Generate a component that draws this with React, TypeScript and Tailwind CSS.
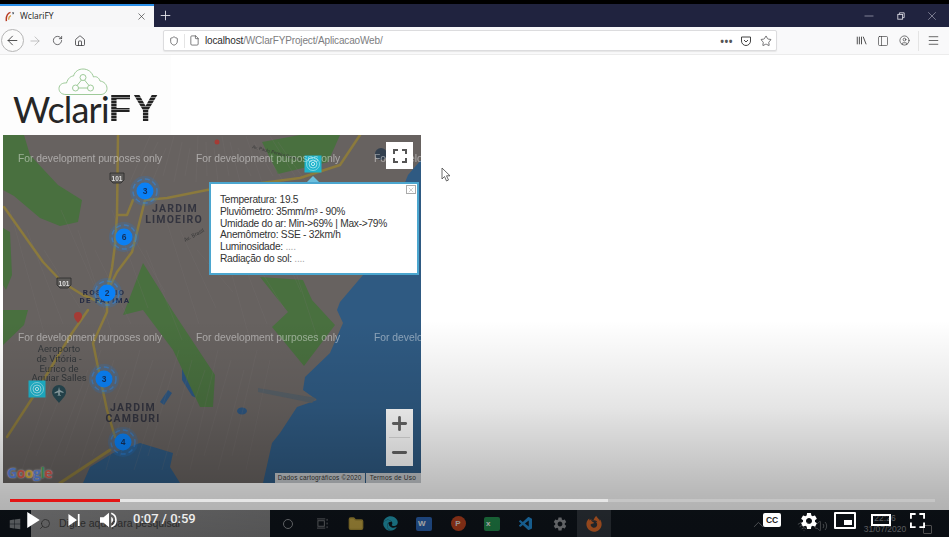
import React from "react";
import { ArrowLeft, ArrowRight, RotateCw, House, Shield, File, Star, X, Plus, Minus, Menu, PanelLeft, CircleUser, Search, Folder, ChevronUp, Wifi, Volume2 } from "lucide-react";
import { MdSettings } from "react-icons/md";
import { VscVscode } from "react-icons/vsc";
import { FaFirefoxBrowser, FaEdge, FaWindows } from "react-icons/fa";

const SANS = "font-['Liberation_Sans',Arial,sans-serif]";

function Cluster({ x, y, n }: { x: number; y: number; n: number }) {
  return (
    <g>
      <circle cx={x} cy={y} r="15" fill="#1d7fe0" opacity="0.2" />
      <circle cx={x} cy={y} r="12" fill="none" stroke="#2a8cf0" strokeWidth="1.5" strokeDasharray="5 3" opacity="0.5" />
      <circle cx={x} cy={y} r="8.5" fill="#0a80f5" />
      <text x={x} y={y + 3} textAnchor="middle" fontSize="8.5" fontWeight="700" fill="#14305c" fontFamily="Liberation Sans">{n}</text>
    </g>
  );
}

function Beacon({ x, y }: { x: number; y: number }) {
  return (
    <g>
      <rect x={x - 8.5} y={y - 8.5} width="17" height="17" fill="#1fb4cc" />
      <circle cx={x} cy={y} r="6.5" fill="none" stroke="#a6e6ef" strokeWidth="0.7" />
      <circle cx={x} cy={y} r="4" fill="none" stroke="#c9f1f6" strokeWidth="0.7" />
      <circle cx={x} cy={y} r="1.6" fill="none" stroke="#e6fafc" strokeWidth="0.8" />
    </g>
  );
}

function Shield101({ x, y }: { x: number; y: number }) {
  return (
    <g>
      <path d={`M${x - 7} ${y - 5}h14v7l-3 3h-8l-3-3z`} fill="#5c5a58" stroke="#2c2c2c" strokeWidth="0.8" />
      <text x={x} y={y + 2.5} textAnchor="middle" fontSize="6.5" fontWeight="700" fill="#ddd" fontFamily="Liberation Sans">101</text>
    </g>
  );
}

function MapDrawing() {
  const devRows = [158, 337];
  const devCols = [18, 196, 374];
  const streets: string[] = [];
  for (let i = 0; i < 17; i++) {
    streets.push(`M${10 + i * 17} ${210 + (i % 3) * 20}L${46 + i * 17} ${340 - (i % 4) * 16}`);
    streets.push(`M${62 + i * 13} ${350 + (i % 3) * 10}L${22 + i * 14} ${470 - (i % 2) * 14}`);
    streets.push(`M${150 + i * 8} ${136 + (i % 3) * 6}L${130 + i * 11} ${182 - (i % 2) * 6}`);
  }
  return (
    <svg viewBox="3 135 418 348" className="block h-full w-full blur-[0.4px]">
      <rect x="3" y="135" width="418" height="348" fill="#676260" />
      {/* water */}
      <path d="M421 160L408 175L392 215L363 275L340 302L337 310L343 323L330 353L305 377L303 390L317 400L297 407L280 433L272 443L263 483L421 483Z" fill="#2f5a82" />
      <path d="M83 483L90 467L113 453L140 443L173 453L170 467L180 483Z" fill="#2f5a82" />
      <path d="M182 360L186 375L194 388L210 396L206 402L192 396L182 380Z" fill="#2d5680" />
      <path d="M168 390L172 393L164 405L160 402Z" fill="#2d5680" />
      <ellipse cx="242" cy="411" rx="5" ry="3.500" fill="#2d5680" />
      <path d="M258 388L316 398L312 403L258 392Z" fill="#565f66" />
      {/* parks */}
      <path d="M3 135H24L30 155L58 185L82 200L78 222L60 226L40 218L14 196L3 190Z" fill="#49703f" />
      <path d="M3 228L10 232L12 275L6 290L3 285Z" fill="#49703f" />
      <path d="M3 310H28L24 325L3 345Z" fill="#49703f" />
      <path d="M123 315L143 263L160 290L172 310H143Z" fill="#49703f" />
      <path d="M143 310H172L215 375L213 407L200 407L173 350Z" fill="#49703f" />
      <path d="M260 277L303 280L312 300L335 325L304 366L272 327L288 312Z" fill="#49703f" />
      <path d="M262 142L300 135H340L328 162L278 174Z" fill="#49703f" />
      {/* street grid */}
      <path d={streets.join("")} stroke="#7d7878" strokeWidth="0.5" fill="none" opacity="0.35" />
      {/* roads */}
      <g fill="none" stroke="#8b7a3d" strokeWidth="2.500" strokeLinejoin="round" strokeLinecap="round">
        <path d="M118 135L117 215L115 245L112 268L107 290L107 312L93 343L100 377L107 410L115 437" />
        <path d="M4 207L43 262L62 282L83 295L100 302" />
        <path d="M145 200L132 252L117 272L107 292" />
        <path d="M133 200L127 215L117 215" />
        <path d="M145 200L167 198L207 190L300 178L340 165L360 135" />
        <path d="M88 310L72 333L33 397L7 437" />
        <path d="M60 483L110 450" strokeWidth="3" />
      </g>
      {/* pins */}
      <path d="M78 312a4 4 0 0 1 4 4c0 3-4 7-4 7s-4-4-4-7a4 4 0 0 1 4-4z" fill="#a43b35" />
      <circle cx="217" cy="142" r="2.500" fill="#a43b35" />
      <circle cx="381" cy="154" r="6" fill="#33404f" />
      <Shield101 x={117} y={178} />
      <Shield101 x={64} y={283} />
      {/* place names */}
      <g fontFamily="Roboto" fontWeight="700" fill="#33343f" textAnchor="middle" letterSpacing="1.2">
        <text x="175" y="212" fontSize="10.500">JARDIM</text>
        <text x="174" y="223" fontSize="10.500">LIMOEIRO</text>
        <text x="104" y="295" fontSize="8" fill="#262c44">ROSÁRIO</text>
        <text x="105" y="303" fontSize="8" fill="#262c44">DE FÁTIMA</text>
        <text x="133" y="411" fontSize="10.500">JARDIM</text>
        <text x="133" y="422" fontSize="10.500">CAMBURI</text>
      </g>
      <g fontFamily="Roboto" fill="#33373a" textAnchor="middle" fontSize="9.500">
        <text x="59" y="352">Aeroporto</text>
        <text x="59" y="361.500">de Vitória -</text>
        <text x="59" y="371.500">Eurico de</text>
        <text x="59" y="381">Aguiar Salles</text>
      </g>
      <text x="185" y="242" fontSize="5.500" fill="#3a3a3a" transform="rotate(-28 185 242)" fontFamily="Roboto">Av. Brasil</text>
      <text x="252" y="148" fontSize="4.500" fill="#3a3a3a" transform="rotate(15 252 148)" fontFamily="Roboto">Av. Paulo Pereira Gomes</text>
      <path d="M59 385a7 7 0 0 1 7 7c0 4-4 7-7 11c-3-4-7-7-7-11a7 7 0 0 1 7-7z" fill="#26464f" />
      <path d="M59 387l.8 3 3.700 2v1l-3.700-1v2.500l1 .9v.6l-1.800-.5-1.800.5V396l1-.9V392.500l-3.700 1v-1l3.700-2z" fill="#8fa4a8" />
      <Cluster x={145} y={191} n={3} />
      <Cluster x={124} y={237} n={6} />
      <Cluster x={107} y={293} n={2} />
      <Cluster x={104} y={379} n={3} />
      <Cluster x={123} y={442} n={4} />
      <Beacon x={313} y={164} />
      <Beacon x={37} y={389} />
      {devRows.map((y) =>
        devCols.map((x) => (
          <text key={`${x}-${y}`} x={x} y={y + 4} fontSize="10.300" fill="#ffffff" fillOpacity="0.45" fontFamily="Liberation Sans">
            For development purposes only
          </text>
        ))
      )}
    </svg>
  );
}

function Popup() {
  const lines: [string, string?][] = [
    ["Temperatura: 19.5"],
    ["Pluviômetro: 35mm/m³ - 90%"],
    ["Umidade do ar: Min->69% | Max->79%"],
    ["Anemômetro: SSE - 32km/h"],
    ["Luminosidade: ", "...."],
    ["Radiação do sol: ", "...."],
  ];
  return (
    <div className={`absolute left-[206px] top-[47px] h-[93px] w-[210px] border-2 border-[#4ba6cf] bg-white pl-[9px] pt-[10px] text-[10.2px] leading-[11.8px] tracking-[-0.26px] text-[#333] ${SANS}`}>
      <div className="absolute left-[96px] top-[-8px] h-0 w-0 border-x-[6px] border-b-[6px] border-x-transparent border-b-[#6cbfdd]" />
      <div className="absolute right-[1px] top-[1px] flex h-[9px] w-[10px] items-center justify-center border border-[#aaa] text-[#888]">
        <X size={8} strokeWidth={1.2} />
      </div>
      {lines.map(([a, b]) => (
        <div key={a}>
          {a}
          {b && <span className="text-[#aaa]">{b}</span>}
        </div>
      ))}
    </div>
  );
}

function Logo() {
  return (
    <div className="relative flex h-[80px] w-[171px] items-end bg-[#fdfdfd] pb-[6px] pl-[13px]">
      <svg viewBox="0 0 50 28" className="absolute left-[58px] top-[13px] h-[28px] w-[50px]" fill="none" stroke="#93c48d" strokeWidth="0.9">
        <path d="M8 26.500C3 26.500 1 23.500 1 20.500C1 16.500 5 14.500 8.500 15C10 10 13 8 15.500 8C17 3 21 1 25 1C30 1 34 4 35.500 9C38 8 41 9.500 42 13C46 13.500 49 16.500 49 20.500C49 24 46 26.500 43 26.500Z" />
        <circle cx="25" cy="9.500" r="3" />
        <circle cx="17.500" cy="20" r="3" />
        <circle cx="32.500" cy="20" r="3" />
        <path d="M23.500 12L19 17.500M26.500 12L31 17.500M20.500 20H29.500" />
      </svg>
      <span className="font-['Lato',sans-serif] text-[36px] font-normal leading-[40px] tracking-[-0.8px] text-[#262626]">Wclari</span>
      <span className="bg-[repeating-linear-gradient(180deg,#222_0px,#222_2px,#8a8a8a_2px,#8a8a8a_3px)] bg-clip-text font-['Liberation_Sans',sans-serif] text-[37px] font-bold leading-[40px] tracking-[2px] text-transparent">FY</span>
    </div>
  );
}

function Browser() {
  return (
    <>
      <div className="h-[4px] bg-black" />
      <div className="flex h-[23px] items-center bg-[#20233f]">
        <div className="flex h-full w-[154px] items-center border-t-2 border-[#2b8fe8] bg-[#f7f7f8] pl-[5px] pr-[7px]">
          <svg viewBox="0 0 12 12" className="h-[11px] w-[11px]">
            <path d="M1.500 11C1 6 3 2.500 6 1.500" stroke="#b73b22" strokeWidth="1.600" fill="none" />
            <path d="M8 1l2 1-1.400 2z" fill="#1d2b3a" />
            <path d="M4 9.500C4 7 5 5.500 6.500 5" stroke="#d49b43" strokeWidth="1.300" fill="none" />
          </svg>
          <span className="ml-[4px] font-['Open_Sans',sans-serif] text-[8.5px] text-[#222]">WclariFY</span>
          <X size={11} strokeWidth={1.4} className="ml-auto text-[#333]" />
        </div>
        <Plus size={15} strokeWidth={1.4} className="ml-[4px] text-[#e8e8ee]" />
        <div className="ml-auto flex items-center pr-[10px] text-[#c9cad6]">
          <Minus size={14} strokeWidth={1} />
          <svg viewBox="0 0 10 10" className="ml-[21px] h-[8px] w-[8px]" fill="none" stroke="#d8d8e2" strokeWidth="1.100"><rect x="1" y="3" width="6" height="6" /><path d="M3 3V1H9V7H7" /></svg>
          <X size={14} strokeWidth={0.9} className="ml-[20px]" />
        </div>
      </div>
      <div className="flex h-[28px] items-center border-b border-[#ececec] bg-[#f9f9fa] text-[#3a3a3c]">
        <div className="ml-[1px] flex h-[23px] w-[23px] items-center justify-center rounded-full border border-[#b5b5b5] bg-[#fbfbfb]">
          <ArrowLeft size={15} strokeWidth={1.4} />
        </div>
        <ArrowRight size={14} strokeWidth={1.2} className="ml-[4px] text-[#aaa]" />
        <RotateCw size={11} strokeWidth={1.6} className="ml-[10px]" />
        <House size={12} strokeWidth={1.6} className="ml-[11px]" />
        <div className="ml-[77px] flex h-[21px] w-[614px] items-center rounded-[2px] border border-[#dcdcde] bg-white pl-[5px] pr-[4px] shadow-[0_1px_1px_#e6e6e6]">
          <Shield size={10} strokeWidth={1.6} />
          <div className="ml-[5px] h-[14px] w-px bg-[#e4e4e4]" />
          <File size={11} strokeWidth={1.4} className="ml-[4px]" />
          <span className={`ml-[5px] text-[10px] tracking-[-0.15px] text-[#7d7d80] ${SANS}`}><span className="text-[#2b2b2e]">localhost</span>/WClarFYProject/AplicacaoWeb/</span>
          <span className="ml-auto text-[10px] font-bold leading-[8px] tracking-[0.5px] text-[#555]">•••</span>
          <svg viewBox="0 0 12 12" className="ml-[7px] h-[12px] w-[12px]" fill="none" stroke="#444" strokeWidth="1"><path d="M1.500 2H10.500V6A4.500 4.500 0 0 1 1.500 6Z" /><path d="M4 5L6 7L8 5" /></svg>
          <Star size={12} strokeWidth={1.4} className="ml-[8px]" />
        </div>
        <svg viewBox="0 0 13 11" className="ml-[79px] h-[11px] w-[11px]" fill="none" stroke="#444" strokeWidth="1.100"><path d="M1.500 1V10M4 1V10M6.500 1V10M8.500 1L12 10" /></svg>
        <PanelLeft size={12} strokeWidth={1.3} className="ml-[10px]" />
        <CircleUser size={11} strokeWidth={1.5} className="ml-[10px]" />
        <div className="ml-[8px] h-[20px] w-px bg-[#e4e4e4]" />
        <Menu size={13} strokeWidth={1.4} className="ml-[8px]" />
      </div>
    </>
  );
}

function MapCard() {
  return (
    <div className="relative ml-[3px] h-[348px] w-[418px] overflow-hidden">
      <MapDrawing />
      <Popup />
      <div className="absolute left-[383px] top-[7px] flex h-[27px] w-[27px] items-center justify-center bg-white">
        <svg viewBox="0 0 14 14" className="h-[14px] w-[14px]" fill="none" stroke="#555" strokeWidth="2"><path d="M1 5V1H5M9 1H13V5M13 9V13H9M5 13H1V9" /></svg>
      </div>
      <div className="absolute left-[383px] top-[274px] flex h-[57px] w-[27px] flex-col items-center bg-white text-[#666]">
        <div className="flex h-[28px] items-center"><Plus size={21} strokeWidth={3.2} /></div>
        <div className="h-px w-[21px] bg-[#ddd]" />
        <div className="flex h-[28px] items-center"><Minus size={21} strokeWidth={3.2} /></div>
      </div>
      <div className="absolute bottom-[2px] left-[4px] font-['Open_Sans',sans-serif] text-[14px] font-bold leading-[16px] tracking-[-0.5px] [text-shadow:0_0_2px_#d8d8d8]">
        <span className="text-[#5b85de]">G</span><span className="text-[#d45a4a]">o</span><span className="text-[#d8b03e]">o</span><span className="text-[#5b85de]">g</span><span className="text-[#4aa35c]">l</span><span className="text-[#d45a4a]">e</span>
      </div>
      <div className={`absolute bottom-0 right-0 flex h-[10px] items-center text-[6.5px] text-[#333] ${SANS}`}>
        <span className="bg-[#c4c8cc] pl-[3px] pr-[3px] leading-[10px] tracking-[0.2px]">Dados cartográficos ©2020</span>
        <span className="ml-px bg-[#c4c8cc] pl-[4px] pr-[5px] leading-[10px] tracking-[0.2px]">Termos de Uso</span>
      </div>
    </div>
  );
}

function TaskIcon({ children, active }: { children: React.ReactNode; active?: boolean }) {
  return <div className={`flex h-full w-[34px] items-center justify-center ${active ? "bg-[#2f353c]" : ""}`}>{children}</div>;
}

function OfficeIcon({ bg, letter }: { bg: string; letter: string }) {
  return (
    <div className={`flex h-[14px] w-[16px] items-center rounded-[2px] pl-[2px] text-[8px] font-bold text-[#eee] ${bg} ${SANS}`}>{letter}</div>
  );
}

function Taskbar() {
  return (
    <div className="relative flex h-[27px] items-center bg-[#0f151c] text-[#8a8d91]">
      <div className="flex h-full w-[31px] items-center justify-center pr-[2px] text-[#7c8185]">
        <FaWindows size={12} />
      </div>
      <div className="flex h-full w-[239px] items-center bg-[linear-gradient(90deg,#8c8c8d,#7f7f80)] pl-[8px] text-[#3e3e3e]">
        <Search size={12} strokeWidth={1.6} className="-scale-x-100" />
        <span className={`ml-[8px] text-[10.5px] ${SANS}`}>Digite aqui para pesquisar</span>
      </div>
      <div className="ml-[1px] flex h-full items-center">
        <TaskIcon><div className="h-[10px] w-[10px] rounded-full border-[1.5px] border-[#8a8d91]" /></TaskIcon>
        <TaskIcon>
          <svg viewBox="0 0 12 12" className="h-[11px] w-[11px]" fill="none" stroke="#7a7d80" strokeWidth="1"><rect x="1" y="3" width="7" height="6" /><path d="M0 1H9M0 11H9M11 1V3M11 5V7M11 9V11" /></svg>
        </TaskIcon>
        <TaskIcon><Folder size={16} fill="#c2a544" stroke="#a88f36" /></TaskIcon>
        <TaskIcon><FaEdge size={15} className="text-[#239db5]" /></TaskIcon>
        <TaskIcon><OfficeIcon bg="bg-[#2a62b0]" letter="W" /></TaskIcon>
        <TaskIcon><div className={`flex h-[15px] w-[15px] items-center justify-center rounded-full bg-[#b8421f] text-[8px] font-bold text-[#ddd] ${SANS}`}>P</div></TaskIcon>
        <TaskIcon><OfficeIcon bg="bg-[#228a4c]" letter="x" /></TaskIcon>
        <TaskIcon><VscVscode size={16} className="text-[#2188cf]" /></TaskIcon>
        <TaskIcon><MdSettings size={16} className="text-[#8e9195]" /></TaskIcon>
        <TaskIcon active><FaFirefoxBrowser size={16} className="text-[#d9682a]" /></TaskIcon>
      </div>
      <div className="ml-auto flex h-full items-center pr-[17px]">
        <ChevronUp size={17} strokeWidth={1.1} className="mt-[2px]" />
        <Wifi size={14} strokeWidth={1.2} className="ml-[30px] mt-[4px]" />
        <Volume2 size={14} strokeWidth={1.2} className="ml-[3px] mt-[4px]" />
        <div className={`ml-[35px] w-[44px] text-center text-[8.5px] leading-[11px] text-[#85888c] ${SANS}`}>
          <div>22:26</div>
          <div>31/07/2020</div>
        </div>
        <div className="ml-[16px] mt-[12px] h-[9px] w-[9px] rounded-[1px] border border-[#777]" />
      </div>
    </div>
  );
}

function Player() {
  return (
    <div className="absolute inset-x-0 bottom-0 h-[38px] text-white">
      <div className="ml-[10px] flex h-[3px] w-[925px] bg-[#c5c5c5]">
        <div className="w-[110px] bg-[#e31414]" />
        <div className="w-[488px] bg-[#e6e6e6]" />
      </div>
      <div className="mt-[7px] flex items-start">
        <svg viewBox="0 0 14 18" className="ml-[27px] mt-[3px] h-[16px] w-[13px]" fill="#fff"><path d="M0 0L14 9L0 18Z" /></svg>
        <svg viewBox="0 0 13 14" className="ml-[28px] mt-[5px] h-[12px] w-[12px]" fill="#fff"><path d="M0 0L10 7L0 14Z" /><rect x="11" width="2" height="14" /></svg>
        <svg viewBox="0 0 20 18" className="ml-[20px] mt-[2px] h-[18px] w-[18px]" fill="#fff"><path d="M0 6H4L10 1V17L4 12H0Z" /><path d="M12.500 5.500A4 4 0 0 1 12.500 12.500Z" /><path d="M12.500 1.500A8 8 0 0 1 12.500 16.500" fill="none" stroke="#fff" strokeWidth="1.800" /></svg>
        <span className="ml-[15px] mt-[1px] font-['Roboto',sans-serif] text-[13px] font-medium leading-[18px] text-[#eeeeee]">0:07 / 0:59</span>
        <div className="ml-auto flex items-start pr-[24px]">
          <div className="mt-[4px] flex h-[14px] w-[18px] items-center justify-center rounded-[2px] bg-white font-['Liberation_Sans',sans-serif] text-[8.5px] font-bold leading-none tracking-[-0.2px] text-[#1a1a1a]">CC</div>
          <MdSettings size={20} className="ml-[18px] mt-[2px]" />
          <div className="relative ml-[15px] mt-[3px] h-[17px] w-[22px] rounded-[1px] border-2 border-white">
            <div className="absolute bottom-[2px] right-[2px] h-[5px] w-[8px] bg-white" />
          </div>
          <div className="ml-[15px] mt-[5px] h-[12px] w-[20px] border-2 border-white" />
          <svg viewBox="0 0 16 16" className="ml-[19px] mt-[4px] h-[15px] w-[15px]" fill="none" stroke="#fff" strokeWidth="2"><path d="M1 6V1H6M10 1H15V6M15 10V15H10M6 15H1V10" /></svg>
        </div>
      </div>
    </div>
  );
}

function Cursor() {
  return (
    <svg viewBox="0 0 10 15" className="absolute left-[441px] top-[167px] h-[15px] w-[10px]" fill="#fff" stroke="#444" strokeWidth="0.8">
      <path d="M1 1V12L3.500 9.500L5.500 14L7.500 13L5.500 8.800H9Z" />
    </svg>
  );
}

export default function App() {
  return (
    <div className="relative flex h-[537px] w-[949px] flex-col overflow-hidden bg-white">
      <Browser />
      <main className="flex-1 bg-white">
        <Logo />
        <MapCard />
      </main>
      <Taskbar />
      <Cursor />
      <div className="pointer-events-none absolute inset-x-0 bottom-0 top-[320px] bg-[linear-gradient(180deg,rgba(0,0,0,0)_0%,rgba(0,0,0,0.1)_40%,rgba(0,0,0,0.28)_80%,rgba(0,0,0,0.34)_100%)]" />
      <Player />
    </div>
  );
}
